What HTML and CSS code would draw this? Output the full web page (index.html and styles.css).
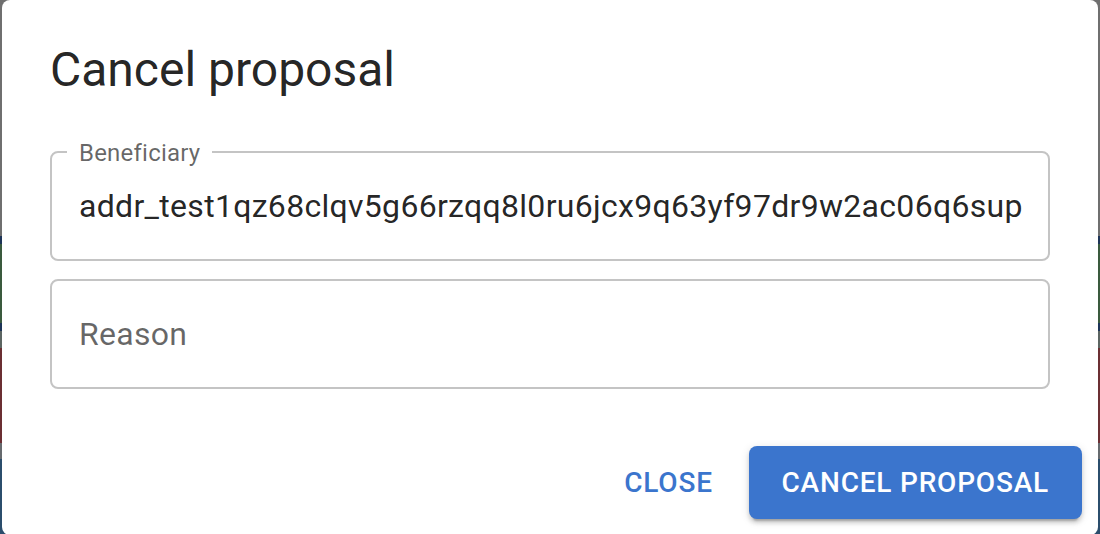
FILE: index.html
```html
<!DOCTYPE html>
<html lang="en">
<head>
<meta charset="utf-8">
<title>Cancel proposal</title>
<link rel="stylesheet" href="styles.css">
</head>
<body>
  <div class="dialog" role="dialog" aria-labelledby="dlg-title">
    <h2 class="dialog-title" id="dlg-title">Cancel proposal</h2>
    <div class="dialog-content">
      <div class="field">
        <span class="field-label">Beneficiary</span>
        <div class="field-value">addr_test1qz68clqv5g66rzqq8l0ru6jcx9q63yf97dr9w2ac06q6sup</div>
      </div>
      <div class="field">
        <div class="field-placeholder">Reason</div>
      </div>
    </div>
    <div class="dialog-actions">
      <button class="btn btn-text" type="button">Close</button>
      <button class="btn btn-contained" type="button">Cancel proposal</button>
    </div>
  </div>
</body>
</html>
```
FILE: styles.css
```css
html, body {
  margin: 0;
  height: 100%;
}

body {
  padding: 0 2px;
  box-sizing: border-box;
  overflow: hidden;
  font-family: Roboto, "Liberation Sans", sans-serif;
  background: linear-gradient(to bottom,
    #6f6f6f 0, #6f6f6f 236px,
    #1d3457 236px, #1d3457 244px,
    #3a5a3e 244px, #3a5a3e 323px,
    #1d3457 323px, #1d3457 331px,
    #5c6562 331px, #5c6562 348px,
    #6b2f33 348px, #6b2f33 443px,
    #666a6e 443px, #666a6e 459px,
    #2b4d6c 459px, #2b4d6c 100%);
}

.dialog {
  height: 535px;
  background: #fff;
  border-radius: 8px;
  display: flex;
  flex-direction: column;
  box-sizing: border-box;
}

.dialog-title {
  margin: 0;
  padding: 38px 48px 0;
  font-size: 48px;
  line-height: 64px;
  font-weight: 400;
  color: rgba(0, 0, 0, 0.87);
}

.dialog-content {
  padding: 49px 48px 0;
  display: flex;
  flex-direction: column;
  gap: 18px;
}

.field {
  position: relative;
  height: 110px;
  box-sizing: border-box;
  border: 2px solid #c4c4c4;
  border-radius: 8px;
  padding: 0 27px;
  display: flex;
  align-items: center;
}

.field-label {
  position: absolute;
  top: -12px;
  left: 15px;
  padding: 0 12px;
  background: #fff;
  font-size: 24px;
  line-height: 24px;
  letter-spacing: 0.22px;
  color: rgba(0, 0, 0, 0.6);
}

.field-value,
.field-placeholder {
  font-size: 32px;
  line-height: 46px;
  letter-spacing: 0.3px;
  white-space: nowrap;
}

.field-value {
  color: rgba(0, 0, 0, 0.87);
}

.field-placeholder {
  color: rgba(0, 0, 0, 0.6);
}

.dialog-actions {
  margin-top: auto;
  padding: 0 16px 16px;
  display: flex;
  justify-content: flex-end;
  gap: 16px;
}

.btn {
  height: 73px;
  border: 0;
  border-radius: 8px;
  font-family: Roboto, "Liberation Sans", sans-serif;
  font-size: 28px;
  font-weight: 500;
  letter-spacing: 0.8px;
  text-transform: uppercase;
  cursor: pointer;
}

.btn-text {
  min-width: 128px;
  padding: 0 16px;
  background: transparent;
  color: #3b75cd;
}

.btn-contained {
  padding: 0 33px;
  background: #3b75cd;
  color: #fff;
  box-shadow: 0 6px 2px -4px rgba(0, 0, 0, 0.2), 0 4px 4px 0 rgba(0, 0, 0, 0.14), 0 2px 10px 0 rgba(0, 0, 0, 0.12);
}
```
